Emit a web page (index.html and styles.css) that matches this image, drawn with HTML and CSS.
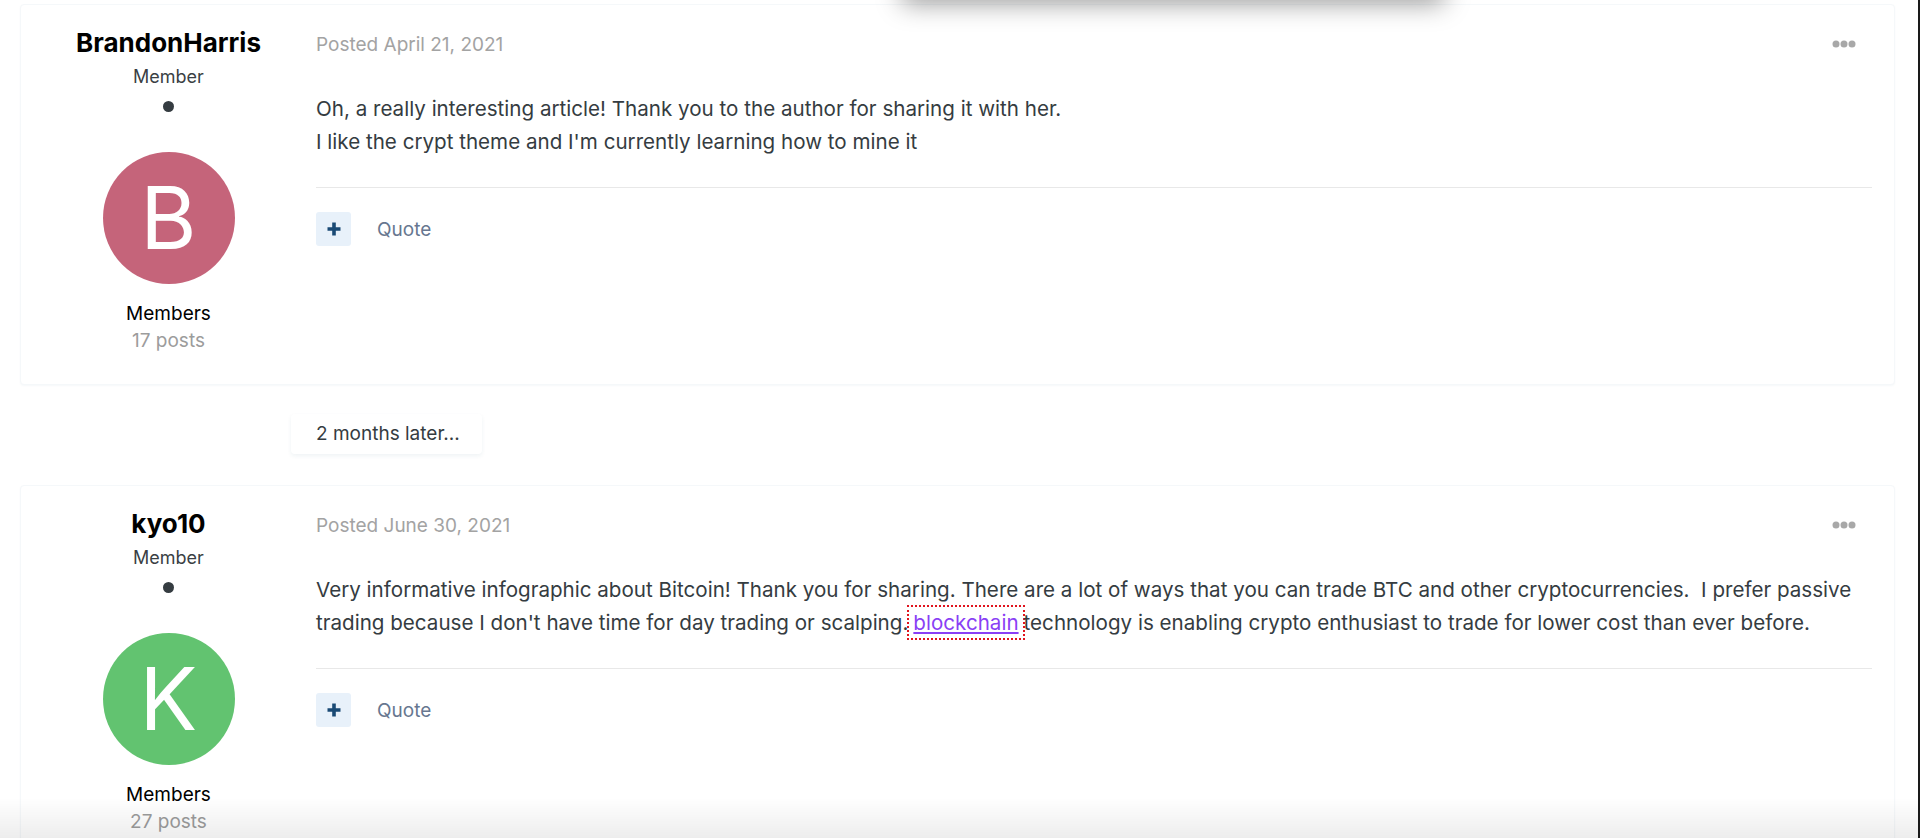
FILE: index.html
```html
<!DOCTYPE html>
<html>
<head>
  <title>Topic replies</title>
  <link rel="stylesheet" href="styles.css">
</head>
<body>
  <div class="page">
    <div class="menu-shadow"></div>

    <article class="post">
      <aside class="author">
        <h3 class="author-name">BrandonHarris</h3>
        <div class="author-rank">Member</div>
        <span class="status-dot"></span>
        <div class="avatar avatar-pink">B</div>
        <div class="author-group">Members</div>
        <div class="author-posts">17 posts</div>
      </aside>
      <div class="post-main">
        <div class="post-meta">
          <span class="post-date">Posted April 21, 2021</span>
          <button class="post-menu" title="More">
            <svg width="24" height="8" viewBox="0 0 24 8"><circle cx="4" cy="4" r="3.5"/><circle cx="12" cy="4" r="3.5"/><circle cx="20" cy="4" r="3.5"/></svg>
          </button>
        </div>
        <div class="post-body">
          <p>Oh, a really interesting article! Thank you to the author for sharing it with her.<br>I like the crypt theme and I'm currently learning how to mine it</p>
        </div>
        <div class="post-actions">
          <button class="react-btn" title="React">
            <svg width="16" height="16" viewBox="0 0 16 16"><path d="M8 1.5v13M1.5 8h13"/></svg>
          </button>
          <a class="quote-link" href="#">Quote</a>
        </div>
      </div>
    </article>

    <div class="time-gap">2 months later...</div>

    <article class="post">
      <aside class="author">
        <h3 class="author-name">kyo10</h3>
        <div class="author-rank">Member</div>
        <span class="status-dot"></span>
        <div class="avatar avatar-green">K</div>
        <div class="author-group">Members</div>
        <div class="author-posts">27 posts</div>
      </aside>
      <div class="post-main">
        <div class="post-meta">
          <span class="post-date">Posted June 30, 2021</span>
          <button class="post-menu" title="More">
            <svg width="24" height="8" viewBox="0 0 24 8"><circle cx="4" cy="4" r="3.5"/><circle cx="12" cy="4" r="3.5"/><circle cx="20" cy="4" r="3.5"/></svg>
          </button>
        </div>
        <div class="post-body">
          <p>Very informative infographic about Bitcoin! Thank you for sharing. There are a lot of ways that you can trade BTC and other cryptocurrencies.&nbsp; I prefer passive trading because I don't have time for day trading or scalping.<span class="term"><a href="#">blockchain</a></span>technology is enabling crypto enthusiast to trade for lower cost than ever before.</p>
        </div>
        <div class="post-actions">
          <button class="react-btn" title="React">
            <svg width="16" height="16" viewBox="0 0 16 16"><path d="M8 1.5v13M1.5 8h13"/></svg>
          </button>
          <a class="quote-link" href="#">Quote</a>
        </div>
      </div>
    </article>
  </div>
  <div class="bottom-fade"></div>
</body>
</html>
```

FILE: styles.css
```css
html,
body {
  margin: 0;
  height: 100%;
  overflow: hidden;
}

body {
  font-family: Inter, "Noto Sans", sans-serif;
  color: #353c41;
  background-color: #fff;
}

.page {
  position: relative;
  min-height: 100%;
  padding: 4px 23px 0 20px;
  border-right: 2px solid #1a1a1a;
}

/* shadow of a dropdown that sits above the visible area */
.menu-shadow {
  position: absolute;
  top: -40px;
  left: 902px;
  width: 542px;
  height: 40px;
  background: #fff;
  box-shadow: 0 4px 26px rgba(0, 0, 0, 0.38);
}

.post {
  display: flex;
  background-color: #fff;
  border: 1px solid #f5f8fa;
  border-radius: 4px;
  box-shadow: 0 1px 2px rgba(30, 80, 120, 0.04);
  padding: 24px 0 30px 0;
}

.author {
  width: 295px;
  flex-shrink: 0;
  display: flex;
  flex-direction: column;
  align-items: center;
}

.author-name {
  margin: 0;
  font-size: 26px;
  line-height: 28px;
  font-weight: 700;
  color: #000;
}

.author-rank {
  margin-top: 8px;
  font-size: 18px;
  line-height: 24px;
  color: #3a3f44;
}

.status-dot {
  margin-top: 12px;
  width: 11px;
  height: 11px;
  border-radius: 50%;
  background-color: #353c41;
}

.avatar {
  margin-top: 40px;
  width: 132px;
  height: 132px;
  border-radius: 50%;
  color: #fff;
  font-size: 86px;
  line-height: 132px;
  text-align: center;
  font-weight: 400;
}

.avatar-pink {
  background-color: #c5647a;
}

.avatar-green {
  background-color: #62c370;
}

.author-group {
  margin-top: 17px;
  font-size: 19px;
  line-height: 26px;
  color: #000;
}

.author-posts {
  margin-top: 1px;
  font-size: 19px;
  line-height: 26px;
  color: #9c9c9c;
}

.post-main {
  flex: 1;
  padding-right: 22px;
}

.post-meta {
  display: flex;
  align-items: center;
  justify-content: space-between;
  height: 30px;
}

.post-date {
  font-size: 19px;
  color: #a3a3a3;
}

.post-menu {
  border: none;
  background: none;
  padding: 0;
  margin-right: 16px;
  fill: #a8a8a8;
  display: flex;
}

.post-body {
  margin-top: 33px;
  padding-bottom: 29px;
  border-bottom: 1px solid #e8e8e8;
  font-size: 20.6px;
  line-height: 33px;
}

.post-body p {
  margin: 0;
}

.term {
  display: inline-block;
  vertical-align: top;
  padding: 0 5px;
  outline: 2px dotted #e0141e;
  outline-offset: -1px;
}

.term a {
  color: #8a3ff5;
}

.post-actions {
  display: flex;
  align-items: center;
  gap: 26px;
  padding-top: 24px;
}

.react-btn {
  width: 35px;
  height: 34px;
  border: none;
  border-radius: 3px;
  background-color: #e8f1fa;
  display: flex;
  align-items: center;
  justify-content: center;
  padding: 0;
}

.react-btn path {
  stroke: #1a4a75;
  stroke-width: 3.6;
  fill: none;
}

.quote-link {
  font-size: 19px;
  color: #677790;
  text-decoration: none;
}

.time-gap {
  display: inline-block;
  margin: 29px 0 31px 271px;
  padding: 0 22px 0 25px;
  height: 40px;
  line-height: 40px;
  font-size: 19px;
  color: #353c41;
  background-color: #fff;
  border-radius: 4px;
  box-shadow: 0 2px 4px rgba(30, 80, 120, 0.07);
}

.bottom-fade {
  position: fixed;
  left: 0;
  right: 2px;
  bottom: 0;
  height: 40px;
  background: linear-gradient(to bottom, rgba(0, 0, 0, 0), rgba(0, 0, 0, 0.07));
  pointer-events: none;
}
```
